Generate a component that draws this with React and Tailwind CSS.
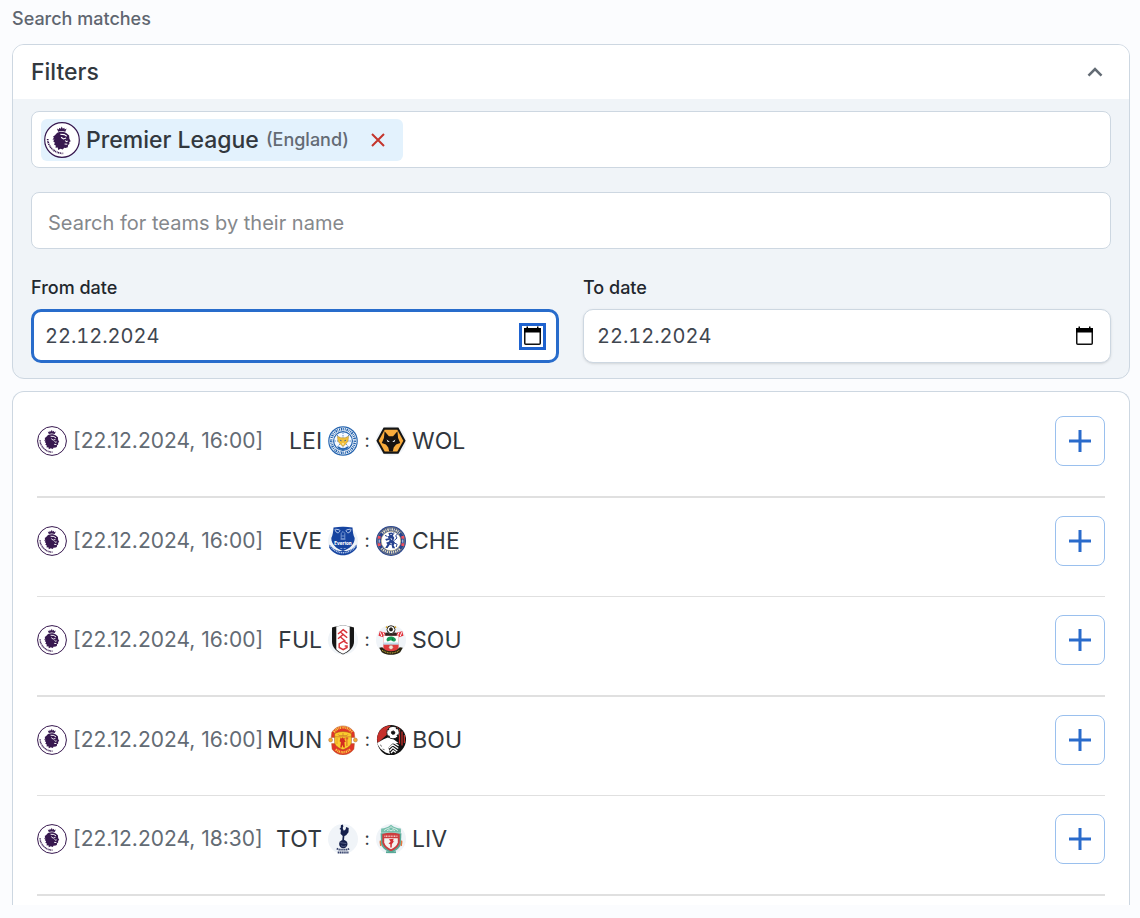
import { useState } from 'react';

function LeagueLogo({ className }) {
  return (
    <svg viewBox="0 0 36 36" className={className} role="img" aria-label="Premier League">
      <circle cx="18" cy="18" r="17.3" fill="#fff" stroke="#37184f" strokeWidth="1.2" />
      <path d="M12.9 6.6l1.9 1 .5-1.900 1.400 1.100 1-2.200 1.100 2.200 1.500-1.100.4 1.900 1.900-1-1.300 3.100c-2.400-.9-4.700-.9-7.100 0z" fill="#37184f" />
      <path
        d="M13.200 10.800c3.400-1.600 7.600-1.300 10.200 1.300l1.700 1.400.3 3.200 1.300 2.500-1.400.9.100 2-1.300.9-.3 2.200-2.300.9-1.300-.4-1.400 1.900-2.300-.9-2.300 1.200-.5-2.500-2.200.3.300-2.300-1.800-.9.900-1.700-1.700-1.600 1.300-1.600-2 .2 1.300-2-.6-1.500 1.500-.8z"
        fill="#37184f"
      />
      <path
        d="M16.300 12.300l3.900.3 2.600 1.700M17.100 15.200l2.300 1.800 2.700-.9M21 18.600l1.700 1 .9-.6M20.600 22l2.700.3"
        fill="none"
        stroke="#fff"
        strokeWidth="1.1"
      />
      <path d="M3.700 17c0 6.900 6 14.300 15.500 14.400" fill="none" stroke="#37184f" strokeWidth="1.7" strokeDasharray="1.1 .7 .8 .5 1.3 .6" />
    </svg>
  );
}

function LeicesterCrest() {
  return (
    <>
      <circle cx="15" cy="15" r="14.8" fill="#2463ae" />
      <circle cx="15" cy="15" r="13.6" fill="#fff" />
      <circle cx="15" cy="15" r="11.8" fill="none" stroke="#2463ae" strokeWidth="2.6" strokeDasharray="1 .8 1.5 .7 .8 .9" />
      <circle cx="15" cy="15" r="9.4" fill="#f5f9ff" stroke="#2463ae" strokeWidth="1.2" />
      <path d="M15 6.5v17M6.5 15h17M9 9l12 12M21 9L9 21" stroke="#5b8ac3" strokeWidth="1" strokeDasharray="1.5 1" />
      <path d="M9.4 10.2l3.5 1.6h4.2l3.5-1.6-.6 5-2.6 3.2-2.4 2-2.4-2-2.6-3.2z" fill="#f2c037" stroke="#a58a48" strokeWidth=".5" />
      <path d="M12 14.2l1.6.6M18 14.2l-1.6.6" stroke="#345b93" strokeWidth=".9" />
      <path d="M13.9 17.5h2.2L15 19z" fill="#fff" />
      <path d="M10 21c3 2.5 7 2.5 10 0" stroke="#2463ae" strokeWidth="1.8" fill="none" />
    </>
  );
}

function WolvesCrest() {
  return (
    <>
      <circle cx="15" cy="15" r="15" fill="#f0f4f8" />
      <path d="M7.6 1.6h14.8L29.6 14.7l-7.2 13.1H7.6L.4 14.7z" fill="#151515" />
      <path d="M8.7 3.8h12.6l6 10.9-6 10.9H8.7l-6-10.9z" fill="#f9ab3c" />
      <path
        d="M8.6 5.3l4.3 4.9h4.2l4.3-4.9.7 6.6 2.1 5.1-4.1 1.4-2.4 3.1-.9 4.1h-3.6l-.9-4.1-2.4-3.1L5.8 17l2.1-5.1z"
        fill="#171311"
      />
      <path d="M10.6 13.6l3.1 2.2-2 .3zM19.4 13.6l-3.1 2.2 2 .3z" fill="#fff" />
    </>
  );
}

function EvertonCrest() {
  return (
    <>
      <circle cx="15" cy="15" r="15" fill="#f0f4f8" />
      <path d="M5.5 1.4c6.5-.8 12.5-.8 19 0 .3 4 .7 7.5 2.2 10.5 0 6-4.5 10.5-11.7 13.2C7.8 22.4 3.3 17.9 3.3 11.9 4.8 8.9 5.2 5.4 5.5 1.4z" fill="#1644a0" />
      <path d="M1.6 18.4c3.4 5.2 8.4 6.7 13.4 6.7s10-1.5 13.4-6.7l.4 3.3c-3.4 4.8-8.3 7.6-13.8 7.6S4.6 26.5 1.2 21.7z" fill="#1644a0" />
      <path d="M2.6 20.2c3 4.4 7.6 6.5 12.4 6.5s9.4-2.1 12.4-6.5" fill="none" stroke="#b7cbec" strokeWidth="1.5" strokeDasharray="1.1 .7" />
      <path d="M7 3.2c.8 4.6 4.4 4.6 5 1M18 4.2c.6 3.600 4.200 3.600 5-1M7.500 3.200l4 .6M18.500 3.800l4-.6" stroke="#c3d3ef" strokeWidth=".9" fill="none" />
      <path d="M13.2 7.3l1.8-1.8 1.8 1.8v5.5h-3.6zM12.5 13.2h5M13.4 10h3.2" stroke="#8ba8db" strokeWidth=".8" fill="none" />
      <text x="15" y="19.3" fill="#fff" fontSize="4.5" fontWeight="800" textAnchor="middle">Everton</text>
      <path d="M12.3 22.5h2M15.7 22.5h2" stroke="#9db5de" strokeWidth=".8" />
    </>
  );
}

function ChelseaCrest() {
  return (
    <>
      <circle cx="15" cy="15" r="15" fill="#26428f" />
      <circle cx="15" cy="15" r="13.7" fill="none" stroke="#b1a56d" strokeWidth=".5" />
      <path d="M6.2 7.3c4.8-5.3 12.8-5.3 17.6 0M5.6 22.3c5 5.5 13.8 5.5 18.8 0" fill="none" stroke="#e7dfbd" strokeWidth="2.4" strokeDasharray="1.1 .8 1.6 .7" />
      <circle cx="15" cy="15" r="9.8" fill="#fff" stroke="#c3b476" strokeWidth=".6" />
      <path d="M1.8 10h2.8v2.8H1.8zM25.4 10h2.8v2.8h-2.8zM1.8 17.3h2.8v2.8H1.8zM25.4 17.3h2.8v2.8h-2.8z" fill="#f0505f" />
      <path d="M3.2 13.5v3.2M26.8 13.5v3.2" stroke="#dce3f4" strokeWidth="1" />
      <path
        d="M12.4 7.1l3.6-.6 1.8 1.7-1 1.5 1.5 2-.9 2.7 1.7 2.4-1.5 2.4 1.6 3.1h-2.8l-.8-3.2-1.9-.3-2.2 3.1H9.2l2.2-3.7-1.4-1.5 3.1-1.2.5-1.7-3.5.9-.9-1.6 3.5-.9-1.4-1.9 2-.2z"
        fill="#26428f"
      />
      <path d="M18.3 14.4l2.7-2.4-1.3-2.3 2.2-2M17.8 7.8v-1.5M9 9.4l2.2 1M18.8 17.2l2.3 1.1-.9 2.7" stroke="#26428f" strokeWidth="1" fill="none" />
      <path d="M14.3 8.5h1.5M14.9 12.1l1 2M14.3 17.3l1.7.8" stroke="#fff" strokeWidth=".8" />
    </>
  );
}

function FulhamCrest() {
  return (
    <>
      <circle cx="15" cy="15" r="15" fill="#f0f4f8" />
      <path d="M4 2.6C11 .1 19 .1 26 2.6v14.2c0 5.7-4.7 10-11 12.7C8.7 26.8 4 22.5 4 16.8z" fill="#161616" />
      <path d="M8.3 1.5c4.4-.9 9-.9 13.4 0v22.8c-1.7 1.7-4 3.2-6.7 4.5-2.7-1.3-5-2.8-6.7-4.5z" fill="#fff" />
      <path d="M10 9l5.2-4.3 4 3.2M10 13.8l5.2-4.3 4 3.2M12.2 6.8l4.4 4M12.2 11.7l5.2 4.6" stroke="#d83339" strokeWidth="1.4" fill="none" />
      <path d="M19.6 18.6l-4-2.4-4.4 2.7v3.6l4 2.1 3.8-2.1v-1.6h-2.3" stroke="#d83339" strokeWidth="1.5" fill="none" />
    </>
  );
}

function SouthamptonCrest() {
  return (
    <>
      <circle cx="15" cy="15" r="15" fill="#f0f4f8" />
      <path d="M2.5 10.8l1.2-4.6 5.2 1.3 2.3 3.3-3.2 1.7zM27.5 10.8l-1.2-4.6-5.2 1.3-2.3 3.3 3.2 1.7z" fill="#e2343d" />
      <path d="M4.2 7.2l1.6 4M6.9 7.4l1.9 3.8M25.8 7.2l-1.6 4M23.1 7.4l-1.9 3.8" stroke="#fff" strokeWidth="1" />
      <path d="M7.4 10h15.2v12.2c0 2.6-3.6 4.6-7.6 6-4-1.4-7.6-3.4-7.6-6z" fill="#e13c3e" />
      <path d="M7.4 10.5h15.2v8.4H7.4z" fill="#fff" />
      <path d="M9.3 7.8c3.7-.7 7.7-.7 11.4 0v3H9.3z" fill="#332321" />
      <path d="M10.4 14.9c.5-2.4 2.2-3.4 4.5-3.4s5 1.4 5 3.2c0 1.4-1.6 2-2.8 1.8l-2.2-1.3-3.3 1.3z" fill="#159b55" />
      <circle cx="16.6" cy="14.1" r=".7" fill="#0d4f2d" />
      <path d="M7.4 17.5h15.2v2.2H7.4z" fill="#c2dcec" />
      <circle cx="15" cy="22.3" r="2.2" fill="#f1e5d9" stroke="#b93835" strokeWidth=".5" />
      <path d="M3.2 22.8l3-.6 3.5 3.1c3.3 1.3 7.3 1.3 10.6 0l3.5-3.1 3 .6-2.6 4.4c-5.6 3.5-12.8 3.5-18.4 0z" fill="#26200f" />
      <path d="M6.2 25.2c5.3 3.6 12.3 3.6 17.6 0" stroke="#b8a23e" strokeWidth="1.2" strokeDasharray="1 .7" fill="none" />
      <circle cx="15" cy="4.7" r="4" fill="#fff" stroke="#242018" strokeWidth=".9" />
      <path d="M13.3 3.8L15 2.6l1.7 1.2-.6 2.1h-2.2zM11.4 3.1l1.4-1.7M18.6 3.1l-1.4-1.7M11.7 6.3l1.7 1.4M18.3 6.3l-1.7 1.4" fill="#242018" stroke="#242018" strokeWidth=".7" />
      <path d="M10.1 2.8l1-1.5M19.9 2.8l-1-1.5" stroke="#dba51e" strokeWidth="1.3" />
    </>
  );
}

function UnitedCrest() {
  return (
    <>
      <circle cx="2.6" cy="15" r="2" fill="#f2ae34" stroke="#9c5633" strokeWidth=".4" />
      <circle cx="27.4" cy="15" r="2" fill="#f2ae34" stroke="#9c5633" strokeWidth=".4" />
      <path d="M3.8 7.3C9.5-1.2 20.5-1.2 26.2 7.3l.6 5.2H3.2zM3.6 18.6h22.8l-.5 5.6c-5.8 7.6-16 7.6-21.8 0z" fill="#e13427" stroke="#b0642b" strokeWidth=".5" />
      <path d="M6 7.2c4.8-6.5 13.2-6.5 18 0M7.8 24.3c4.3 4 10.1 4 14.4 0" fill="none" stroke="#f9c840" strokeWidth="2.4" strokeDasharray="1.3 .8 .9 .6" />
      <path d="M6.6 8.6c5-2.7 11.8-2.7 16.8 0v7.9c0 4.5-3.5 6.3-8.4 8.3-4.9-2-8.4-3.8-8.4-8.3z" fill="#fbcb2d" stroke="#a8521f" strokeWidth=".6" />
      <path d="M7 11.8h16M10 9.2l1 1.4h8l1-1.4M15 8v3" stroke="#c9782a" strokeWidth=".7" fill="none" />
      <path d="M12.5 12.5l1.1 1 1-1.3 1 1.3 1.1-.8-.1 2.4 1.2 1.5-1.4.6.5 5.3h-1.5l-1-2.8-.7 2.8h-1.5l.7-5.3-1.2-1z" fill="#d42c20" />
      <path d="M18.9 12.4v8.6M18.1 14.4v-2M19.7 14.4v-2" stroke="#d34525" strokeWidth=".8" />
      <path d="M9 13v6" stroke="#e89a27" strokeWidth=".9" />
    </>
  );
}

function BournemouthCrest() {
  return (
    <>
      <path d="M1 13C2 5 8 0 15 0s14 5 15 13c.4 8-4.2 14.4-12.2 17H11C4 27.3.6 20.6 1 13z" fill="#111" />
      <path d="M1 13.5C2 5.5 7.5.6 14.7.6l-3 8.3-10 9z" fill="#c6302b" />
      <path d="M21 1.8v7M23.5 3.8v15M26 6.6v14M28.4 10v8" stroke="#c6302b" strokeWidth="1.3" />
      <path d="M1.2 18l6.4-3.7 4.2-1.9 5.7 1.8 5 3.7-6 .5-4 4 1.4 6.7-4.4-1.7C5.6 25.3 2.3 22 1.2 18z" fill="#fff" />
      <path d="M13.2 20l3.6-2.9 5.8 3.7M12.8 23l4-3.2 5.4 3.7M13.6 25.8l3.2-3.2 4.5 3.3M15 28l2.2-2.4 2.6 2" stroke="#fff" strokeWidth="1.3" fill="none" />
      <circle cx="17" cy="7.6" r="6.2" fill="#fff" stroke="#111" strokeWidth=".8" />
      <path d="M15.6 6.6l1.9-.7 1.5 1.3-.6 1.9-2 .2-1.1-1.3z" fill="#111" stroke="#111" strokeWidth=".8" />
      <path d="M11.8 5l1.3-1.3M20 2.8l1.3 1.3M22.1 9.7l-1.3 1.2M12.4 10.6l1.2 1.3" stroke="#111" strokeWidth="1.2" />
      <path d="M4 19.7l2 1.8M6.6 24l2 .8" stroke="#111" strokeWidth=".6" />
    </>
  );
}

function TottenhamCrest() {
  return (
    <>
      <circle cx="15" cy="15" r="15" fill="#f0f4f8" />
      <path
        d="M12.9 1.3l1.8-.8.7 1.8-.7 1.7.9 2.5c1.8-.1 2.5-1.4 2.4-3.5l2.7.9-.2 4.3-2.4 3.1-1.7.8-.4 3.6 1.4.8h-3.2l.5-4.4-2.2-2.3.4-4-1.5-.8 1.3-1.2z"
        fill="#15204c"
      />
      <circle cx="15.3" cy="20.1" r="4.2" fill="#15204c" />
      <path d="M12.3 18.7l6 .8M13 21.7c1.7 1 3.5 1 5 0" stroke="#7f89ad" strokeWidth=".6" fill="none" />
      <path d="M8.7 24.7l2.9 1h6.9l2.9-1M9.7 28.5h10.8" stroke="#34406a" strokeWidth="1.8" strokeDasharray="1.4 .5" fill="none" />
    </>
  );
}

function LiverpoolCrest() {
  return (
    <>
      <circle cx="15" cy="15" r="15" fill="#f0f4f8" />
      <path d="M5.2 4.5c3.6.2 5-1.4 7-1.7L15 .7l2.8 2.1c2 .3 3.4 1.9 7 1.7l.2 4.2H5z" fill="#75bfac" />
      <path d="M8 6.6c3-2.5 5-1.7 7-3.9 2 2.2 4 1.4 7 3.9M11 7c1.3-1.5 2.6-1.5 4 0 1.4-1.5 2.7-1.5 4 0" stroke="#edf5f0" strokeWidth=".8" fill="none" />
      <path d="M4.6 9.2h20.8l-.5 11.3c-1.5 4.1-5.2 6.4-9.9 8.5-4.7-2.1-8.4-4.4-9.9-8.5z" fill="#58aa97" />
      <path d="M6.3 9.9c5.8-1.4 11.6-1.4 17.4 0v8.6c-1 4.5-4.5 6.8-8.7 8.7-4.2-1.9-7.7-4.2-8.7-8.7z" fill="#cd3c3e" />
      <path d="M8.2 14.3h13.6v4.2c-.9 3.3-3.5 5-6.8 6.7-3.3-1.7-5.9-3.4-6.8-6.7z" fill="#f5f1ef" />
      <path d="M8.4 12.2h13.2" stroke="#efc7c2" strokeWidth="1.6" strokeDasharray="1 .6" />
      <path d="M13 15.2l4.6-.5-.6 2.8 1.5-.7-2.6 3.2-.2 3.4h-1.4v-3.2l-1.8-.8 2.1-1.7z" fill="#d52f34" />
      <path d="M4.6 16.7c-1.2 2 .6 3.3 0 5.3M25.4 16.7c1.2 2-.6 3.3 0 5.3" stroke="#e3763e" strokeWidth="1.4" fill="none" />
      <path d="M10 28.2h10" stroke="#58aa97" strokeWidth="1.8" />
    </>
  );
}

function Crest({ art: Art, name }) {
  return (
    <svg viewBox="0 0 30 30" className="size-[30px] shrink-0" role="img" aria-label={name}>
      <Art />
    </svg>
  );
}

const MATCHES = [
  { time: '16:00', home: 'LEI', homeArt: LeicesterCrest, away: 'WOL', awayArt: WolvesCrest },
  { time: '16:00', home: 'EVE', homeArt: EvertonCrest, away: 'CHE', awayArt: ChelseaCrest },
  { time: '16:00', home: 'FUL', homeArt: FulhamCrest, away: 'SOU', awayArt: SouthamptonCrest },
  { time: '16:00', home: 'MUN', homeArt: UnitedCrest, away: 'BOU', awayArt: BournemouthCrest },
  { time: '18:30', home: 'TOT', homeArt: TottenhamCrest, away: 'LIV', awayArt: LiverpoolCrest },
];

function MatchRow({ match }) {
  return (
    <li className="flex items-center justify-between border-[#e0e0e0] pt-[18px] pb-[30px] odd:border-b-2 even:border-b">
      <div className="flex items-center">
        <LeagueLogo className="size-[30px] shrink-0" />
        <span className="ml-1.5 min-w-[190px] text-[21px] leading-7 whitespace-nowrap text-[#636b74]">
          [22.12.2024, {match.time}]
        </span>
        <div className="ml-1 flex items-center gap-1.5 text-[23px] leading-8 text-[#32383e]">
          <span className="min-w-[55px] text-right">{match.home}</span>
          <Crest art={match.homeArt} name={match.home} />
          <span className="w-1.5 text-center text-lg">:</span>
          <Crest art={match.awayArt} name={match.away} />
          <span>{match.away}</span>
        </div>
      </div>
      <button
        type="button"
        className="flex size-[50px] items-center justify-center rounded-lg border border-[#9ac0ee] bg-white text-[#2a6bcb]"
        aria-label={`Add ${match.home} : ${match.away}`}
      >
        <svg viewBox="0 0 22 22" className="size-[22px]" fill="none" stroke="currentColor" strokeWidth="3">
          <path d="M11 0v22M0 11h22" />
        </svg>
      </button>
    </li>
  );
}

function DateField({ id, label, active }) {
  const [value, setValue] = useState('22.12.2024');

  return (
    <div>
      <label htmlFor={id} className="block text-lg leading-6 font-medium text-[#22272e]">
        {label}
      </label>
      <div
        className={`mt-[9px] flex h-[54px] items-center rounded-[10px] bg-white ${
          active ? 'border-3 border-[#286ccb] pr-2.5 pl-[11px]' : 'border border-[#cdd7e1] pr-3 pl-[13px] shadow-sm'
        }`}
      >
        <input
          id={id}
          type="text"
          value={value}
          onChange={(e) => setValue(e.target.value)}
          className="min-w-0 flex-1 bg-transparent text-xl text-[#40464f] tabular-nums outline-none"
        />
        <button
          type="button"
          aria-label={`Choose ${label.toLowerCase()}`}
          className={`flex size-[27px] items-center justify-center ${active ? 'border-3 border-[#1f63cf]' : ''}`}
        >
          <svg viewBox="0 0 19 20" className="h-5 w-[19px] shrink-0">
            <rect x="1.75" y="2.75" width="15.5" height="15.5" rx="1" fill="none" stroke="#111" strokeWidth="1.5" />
            <path d="M1 2h17v4.5H1zM3.5 .5h1.5v2H3.5zM14 .5h1.5v2H14z" fill="#000" />
          </svg>
        </button>
      </div>
    </div>
  );
}

export default function App() {
  const [open, setOpen] = useState(true);

  return (
    <main className="min-h-screen bg-[#fbfcfe] pt-1.5 pr-2.5 pb-3 pl-3 font-['Inter','Liberation_Sans',sans-serif]">
      <h1 className="text-lg leading-[26px] font-medium text-[#5f6670]">Search matches</h1>

      <section className="mt-3 overflow-hidden rounded-xl border border-[#cdd7e1] bg-[#f0f4f8]">
        <button
          type="button"
          className="flex h-[54px] w-full items-center justify-between bg-white pr-[26px] pl-[18px] text-[23px] leading-8 font-medium text-[#32383e]"
          onClick={() => setOpen(!open)}
          aria-expanded={open}
        >
          Filters
          <svg viewBox="0 0 16 10" className="h-2.5 w-4" fill="none" stroke="#636b74" strokeWidth="2.6">
            <path d="M1.5 8.7L8 2.2l6.5 6.5" />
          </svg>
        </button>
        {open && (
          <div className="px-[18px] pt-3 pb-[15px]">
            <div className="flex h-[57px] items-center rounded-lg border border-[#cdd7e1] bg-white px-[9px]">
              <div className="flex h-[42px] items-center rounded-md bg-[#e3f2fd] pr-4 pl-[3px]">
                <LeagueLogo className="size-9 shrink-0" />
                <span className="ml-1.5 text-[23px] leading-8 font-medium text-[#32383e]">Premier League</span>
                <span className="ml-[7px] text-lg font-medium text-[#636b74]">(England)</span>
                <button type="button" className="ml-5 text-[#c4352c]" aria-label="Remove Premier League">
                  <svg viewBox="0 0 18 18" className="size-[18px]" fill="none" stroke="currentColor" strokeWidth="2">
                    <path d="M3 3l12 12M15 3L3 15" />
                  </svg>
                </button>
              </div>
            </div>
            <input
              type="text"
              aria-label="Teams"
              placeholder="Search for teams by their name"
              className="mt-6 block h-[57px] w-full rounded-lg border border-[#cdd7e1] bg-white px-4 pt-1 text-xl text-[#32383e] outline-none placeholder:text-[#85888c]"
            />
            <div className="mt-[27px] grid grid-cols-2 gap-6">
              <DateField id="from-date" label="From date" active />
              <DateField id="to-date" label="To date" />
            </div>
          </div>
        )}
      </section>

      <ul className="mt-3 rounded-t-xl border border-b-0 border-[#cdd7e1] bg-white px-6 pt-1.5 pb-[9px]">
        {MATCHES.map((match) => (
          <MatchRow key={match.home} match={match} />
        ))}
      </ul>
    </main>
  );
}
